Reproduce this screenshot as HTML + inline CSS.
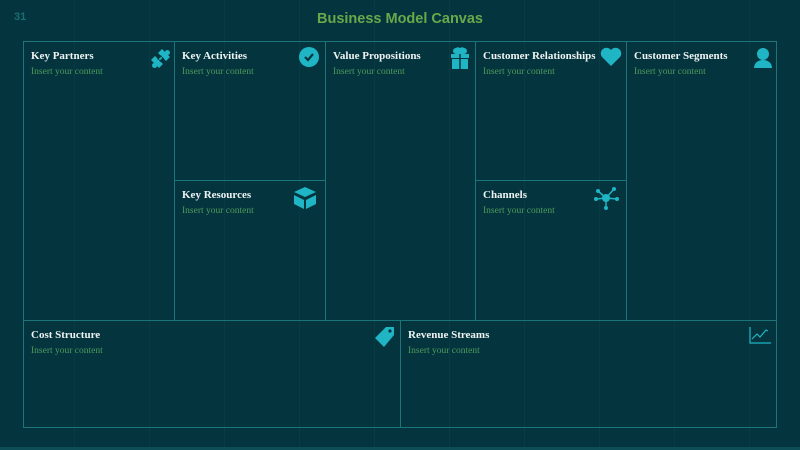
<!DOCTYPE html>
<html><head><style>
body{margin:0;width:800px;height:450px;background:#04353f;position:relative;overflow:hidden;font-family:"Liberation Serif",serif}
.bg{position:absolute;inset:0;background-image:repeating-linear-gradient(90deg,transparent 0 74px,rgba(255,255,255,0.025) 74px 75px)}
.num{position:absolute;left:14px;top:11px;color:#1a6d70;font:bold 11px "Liberation Sans",sans-serif}
.title{position:absolute;left:0;width:800px;top:11px;text-align:center;color:#6aa84a;font:bold 14.5px "Liberation Sans",sans-serif}
.c{position:absolute;border:1px solid #1a7479;box-sizing:border-box}
.c h{display:block;position:absolute;left:7px;top:8px;color:#eef3f2;font-weight:bold;font-size:11px;white-space:nowrap}
.c p{margin:0;position:absolute;left:7px;top:25px;color:#4e9a5a;font-size:9.5px;white-space:nowrap}
.c svg{position:absolute}
.bot{position:absolute;left:0;top:447px;width:800px;height:3px;background:#0d4d55}
</style></head><body>
<div class="bg"></div>
<div class="num">31</div>
<div class="title">Business Model Canvas</div>

<div class="c" style="left:23px;top:41px;width:152px;height:280px"><h>Key Partners</h><p>Insert your content</p>
<svg style="left:124px;top:5px" width="22" height="22" viewBox="0 0 22 22"><path fill="#1fb5c4" d="M3 13l4-4 2 2a2.5 2.5 0 1 0 3-3l-2-2 4-4 3 3a2.5 2.5 0 1 1 3 3l2 2-4 4-2-2a2.5 2.5 0 1 0-3 3l2 2-4 4-2-2a2.5 2.5 0 1 1-3-3z"/></svg></div>
<div class="c" style="left:174px;top:41px;width:152px;height:140px"><h>Key Activities</h><p>Insert your content</p>
<svg style="left:124px;top:5px" width="20" height="20" viewBox="0 0 20 20"><circle cx="10" cy="10" r="10" fill="#1fb5c4"/><path d="M6 10l3 3 5-6" stroke="#04353f" stroke-width="2.2" fill="none"/></svg></div>
<div class="c" style="left:174px;top:180px;width:152px;height:141px"><h>Key Resources</h><p>Insert your content</p>
<svg style="left:117px;top:5px" width="26" height="24" viewBox="0 0 26 24"><path fill="#1fb5c4" d="M13 1l11 5-11 5L2 6z M2 9l10 5v9L2 18z M24 9l-10 5v9l10-5z"/></svg></div>
<div class="c" style="left:325px;top:41px;width:151px;height:280px"><h>Value Propositions</h><p>Insert your content</p>
<svg style="left:124px;top:5px" width="20" height="22" viewBox="0 0 20 22"><path fill="#1fb5c4" d="M1 7h18v4H1z M2 12h16v10H2z M6 1a3 3 0 0 1 4 5 3 3 0 0 1 4-5 3 3 0 0 1 0 6H6a3 3 0 0 1 0-6z"/><path stroke="#04353f" stroke-width="1.5" d="M10 7v15"/></svg></div>
<div class="c" style="left:475px;top:41px;width:152px;height:140px"><h>Customer Relationships</h><p>Insert your content</p>
<svg style="left:124px;top:5px" width="22" height="20" viewBox="0 0 22 20"><path fill="#1fb5c4" d="M11 19L2 10A5.5 5.5 0 0 1 11 3a5.5 5.5 0 0 1 9 7z"/></svg></div>
<div class="c" style="left:475px;top:180px;width:152px;height:141px"><h>Channels</h><p>Insert your content</p>
<svg style="left:117px;top:5px" width="26" height="24" viewBox="0 0 26 24"><g stroke="#1fb5c4" stroke-width="1.5"><path d="M13 12L5 5M13 12L21 3M13 12L24 13M13 12L13 22M13 12L3 13"/></g><g fill="#1fb5c4"><circle cx="13" cy="12" r="4"/><circle cx="5" cy="5" r="2"/><circle cx="21" cy="3" r="2"/><circle cx="24" cy="13" r="2"/><circle cx="13" cy="22" r="2"/><circle cx="3" cy="13" r="2"/></g></svg></div>
<div class="c" style="left:626px;top:41px;width:151px;height:280px"><h>Customer Segments</h><p>Insert your content</p>
<svg style="left:126px;top:5px" width="20" height="22" viewBox="0 0 20 22"><circle cx="10" cy="7" r="6" fill="#1fb5c4"/><path fill="#1fb5c4" d="M1 21c0-5 4-8 9-8s9 3 9 8z"/></svg></div>
<div class="c" style="left:23px;top:320px;width:378px;height:108px"><h>Cost Structure</h><p>Insert your content</p>
<svg style="left:350px;top:5px" width="22" height="22" viewBox="0 0 22 22"><path fill="#1fb5c4" d="M12 1h8v8L10 21 1 12z"/><circle cx="16" cy="5" r="1.6" fill="#04353f"/></svg></div>
<div class="c" style="left:400px;top:320px;width:377px;height:108px"><h>Revenue Streams</h><p>Insert your content</p>
<svg style="left:348px;top:5px" width="22" height="18" viewBox="0 0 22 18"><path stroke="#1fb5c4" stroke-width="1.2" fill="none" d="M1 1v16h21M3 13l5-5 3 3 6-7 2 1"/></svg></div>
<div class="bot"></div>
</body></html>
